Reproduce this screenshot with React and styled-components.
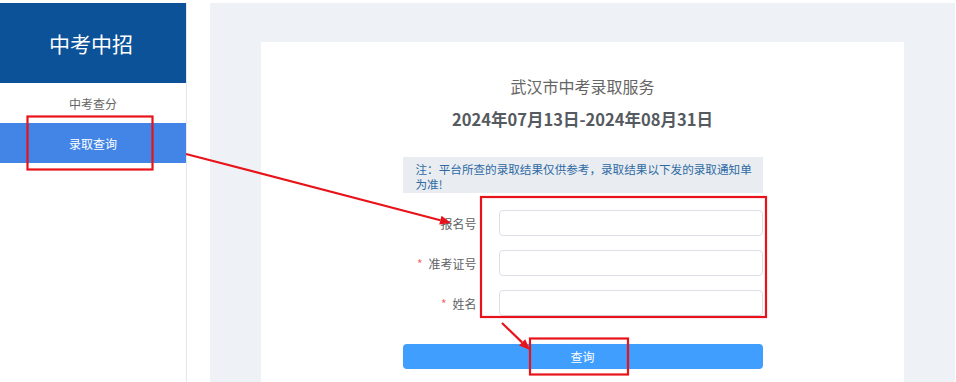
import React from "react";
import styled, { createGlobalStyle } from "styled-components";

const Global = createGlobalStyle`
  html, body { margin: 0; padding: 0; height: 100%; overflow: hidden; background: #fff; }
  body { font-family: "Noto Sans CJK SC", "Noto Sans", sans-serif; }
  #root { height: 100%; }
  * { box-sizing: border-box; }
`;

const Page = styled.div`
  position: relative;
  display: flex;
  height: 100%;
  padding-top: 3px;
`;

const Sidebar = styled.aside`
  width: 187px;
  flex: none;
  border-right: 1px solid #e4e7ed;
  background: #fff;
  display: flex;
  flex-direction: column;
`;

const Brand = styled.div`
  height: 80px;
  background: #0b5299;
  color: #fff;
  font-size: 21px;
  display: flex;
  align-items: center;
  justify-content: center;
  padding-right: 4px;
`;

const MenuItem = styled.div`
  height: 40px;
  display: flex;
  align-items: center;
  justify-content: center;
  font-size: 12px;
  color: ${(p) => (p.$active ? "#fff" : "#666")};
  background: ${(p) => (p.$active ? "#4285e6" : "#fff")};
`;

const Main = styled.main`
  flex: 1;
  margin-left: 23px;
  margin-right: 1px;
  background: #eef1f5;
  padding: 39px 51px 0;
  display: flex;
`;

const Card = styled.section`
  flex: 1;
  background: #fff;
  padding-top: 32px;
  display: flex;
  flex-direction: column;
  align-items: center;
`;

const Title = styled.h1`
  margin: 0;
  font-size: 16px;
  line-height: 24px;
  font-weight: 400;
  color: #666;
`;

const DateTitle = styled.h2`
  margin: 9px 0 0;
  font-size: 16.5px;
  line-height: 24px;
  font-weight: 700;
  color: #555a60;
`;

const FormBox = styled.div`
  width: 360px;
  margin-top: 26px;
  display: flex;
  flex-direction: column;
`;

const Note = styled.div`
  background: #e9edf1;
  color: #2e6aa3;
  font-size: 11.6px;
  line-height: 15px;
  padding: 5px 8px 1px 13px;
  height: 36px;
`;

const Fields = styled.div`
  margin-top: 17px;
  display: flex;
  flex-direction: column;
  gap: 14px;
`;

const Row = styled.div`
  display: flex;
  align-items: center;
  height: 26px;
`;

const Label = styled.label`
  width: 74px;
  margin-right: 22px;
  text-align: right;
  font-size: 12px;
  color: #606266;
`;

const Star = styled.span`
  color: #f56c6c;
  margin-right: 6px;
`;

const Input = styled.input`
  flex: 1;
  height: 26px;
  border: 1px solid #dcdfe6;
  border-radius: 4px;
  outline: none;
  padding: 0 10px;
  font: inherit;
`;

const Button = styled.button`
  margin-top: 28px;
  height: 25px;
  border: none;
  border-radius: 4px;
  background: #409eff;
  color: #fff;
  font-family: inherit;
  font-size: 12px;
  cursor: pointer;
`;

const Overlay = styled.svg`
  position: absolute;
  left: 0;
  top: 0;
  width: 956px;
  height: 382px;
  pointer-events: none;
`;

function Arrow({ x1, y1, x2, y2 }) {
  const ang = Math.atan2(y2 - y1, x2 - x1);
  const len = 11;
  const w = 4.5;
  const bx = x2 - len * Math.cos(ang);
  const by = y2 - len * Math.sin(ang);
  const px = -Math.sin(ang) * w;
  const py = Math.cos(ang) * w;
  return (
    <g>
      <line x1={x1} y1={y1} x2={bx} y2={by} stroke="#e8131a" strokeWidth="2.2" />
      <polygon
        points={`${x2},${y2} ${bx + px},${by + py} ${bx - px},${by - py}`}
        fill="#e8131a"
      />
    </g>
  );
}

export default function App() {
  return (
    <>
      <Global />
      <Page>
        <Sidebar>
          <Brand>中考中招</Brand>
          <MenuItem>中考查分</MenuItem>
          <MenuItem $active>录取查询</MenuItem>
        </Sidebar>
        <Main>
          <Card>
            <Title>武汉市中考录取服务</Title>
            <DateTitle>2024年07月13日-2024年08月31日</DateTitle>
            <FormBox>
              <Note>注：平台所查的录取结果仅供参考，录取结果以下发的录取通知单为准!</Note>
              <Fields>
                <Row>
                  <Label>报名号</Label>
                  <Input />
                </Row>
                <Row>
                  <Label><Star>*</Star>准考证号</Label>
                  <Input />
                </Row>
                <Row>
                  <Label><Star>*</Star>姓名</Label>
                  <Input />
                </Row>
              </Fields>
              <Button>查询</Button>
            </FormBox>
          </Card>
        </Main>
        <Overlay viewBox="0 0 956 382">
          <g fill="none" stroke="#e8131a" strokeWidth="2.2">
            <rect x="27.5" y="116.5" width="125" height="53" />
            <rect x="481" y="197" width="285" height="120" />
            <rect x="530" y="338.5" width="98" height="36" />
          </g>
          <Arrow x1={186} y1={154} x2={451} y2={223} />
          <Arrow x1={502} y1={323} x2={530} y2={350} />
        </Overlay>
      </Page>
    </>
  );
}
